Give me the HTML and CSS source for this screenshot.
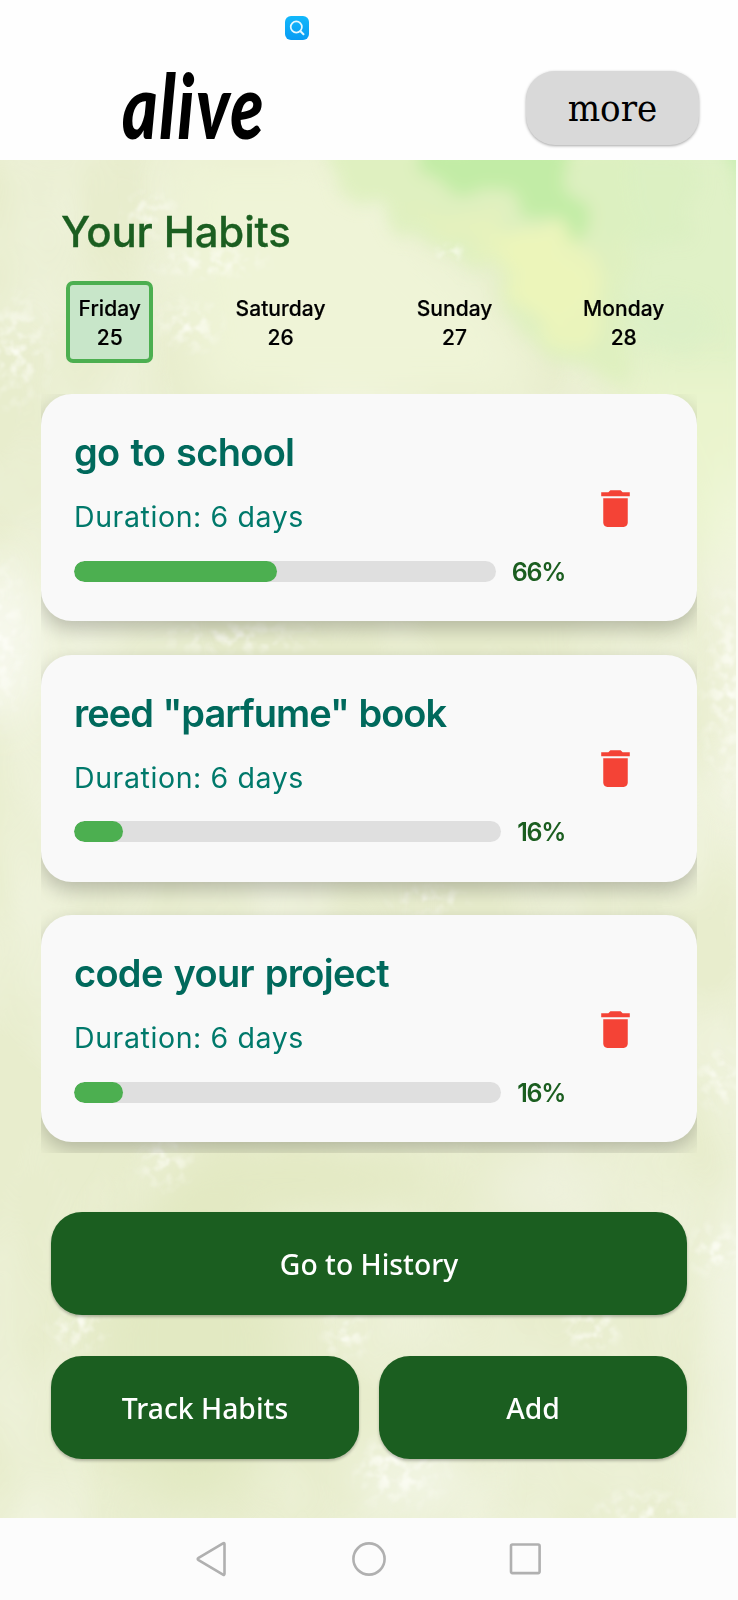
FILE: index.html
```html
<!DOCTYPE html>
<html lang="en">
<head>
<meta charset="utf-8">
<title>alive</title>
<link rel="stylesheet" href="styles.css">
</head>
<body>
<header class="header">
  <div class="status">
    <svg class="search" viewBox="0 0 24 24"><defs><linearGradient id="sg" x1="0" y1="0" x2="0" y2="1"><stop offset="0" stop-color="#12b8fb"/><stop offset="1" stop-color="#089bf3"/></linearGradient></defs><rect width="24" height="24" rx="6" fill="url(#sg)"/><circle cx="11.3" cy="11" r="5.600" fill="none" stroke="#e6f8ff" stroke-width="1.7"/><path d="M15.500 15.200l3 3" stroke="#e6f8ff" stroke-width="2" stroke-linecap="round"/></svg>
  </div>
  <div class="brandbar">
    <div class="logo">alive</div>
    <button class="more">more</button>
  </div>
</header>
<main class="main">
  <svg class="wash" viewBox="0 160 738 1358" preserveAspectRatio="none">
    <defs>
      <filter id="soft" x="-60%" y="-60%" width="220%" height="220%"><feGaussianBlur stdDeviation="24"/></filter>
      <filter id="edge" x="-20%" y="-20%" width="140%" height="140%"><feTurbulence type="fractalNoise" baseFrequency=".025" numOctaves="4" seed="4" result="n"/><feDisplacementMap in2="n" in="SourceGraphic" scale="45" xChannelSelector="R" yChannelSelector="G" result="d"/><feGaussianBlur in="d" stdDeviation="8"/></filter>
      <filter id="speck" x="0" y="0" width="100%" height="100%"><feTurbulence type="fractalNoise" baseFrequency=".09" numOctaves="4" seed="8"/><feColorMatrix values="0 0 0 0 1  0 0 0 0 1  0 0 0 0 .96  3.6 0 0 0 -1.55" result="n"/><feComposite in="n" in2="SourceGraphic" operator="in"/><feGaussianBlur stdDeviation=".8"/></filter>
      <filter id="cloud" x="0" y="0" width="100%" height="100%"><feTurbulence type="fractalNoise" baseFrequency=".007 .004" numOctaves="3" seed="13"/><feColorMatrix values="0 0 0 0 .96  0 0 0 0 .97  0 0 0 0 .91  2.4 0 0 0 -.95"/></filter>
      <radialGradient id="w"><stop offset="0" stop-color="#fff"/><stop offset="1" stop-color="#fff" stop-opacity="0"/></radialGradient>
    </defs>
    <rect y="160" width="738" height="1358" fill="#e8edcd"/>
    <rect y="160" width="738" height="1358" filter="url(#cloud)" opacity=".5"/>
    <g filter="url(#soft)">
      <path d="M170 150H330L520 330 540 400H200Z" fill="#eff4d7"/>
      <path d="M340 120H780V400L660 390 560 320Z" fill="#e0f1c7"/>
      <path d="M600 370H780V560H690Z" fill="#eaf4cd"/>
      <ellipse cx="5" cy="640" rx="14" ry="90" fill="#fff"/>
      <ellipse cx="736" cy="640" rx="12" ry="180" fill="#fafaf0"/>
      <ellipse cx="190" cy="1350" rx="90" ry="170" fill="#e2e9c2"/>
      <ellipse cx="300" cy="1180" rx="150" ry="40" fill="#e3e9c3"/>
      <ellipse cx="738" cy="1400" rx="20" ry="220" fill="#f5f8ea"/>
      <ellipse cx="415" cy="1480" rx="60" ry="30" fill="#f3f6e6"/>
      <ellipse cx="550" cy="1190" rx="60" ry="40" fill="#eef1dc"/>
    </g>
    <g filter="url(#edge)">
      <path d="M325 140H630V390L570 370 520 330 480 265 410 245 360 205Z" fill="#dff0c0"/>
      <path d="M400 200 490 215 560 245 590 300 560 320 505 300 470 250Z" fill="#e6f2bb" opacity=".8"/>
      <path d="M500 225 580 235 610 280 590 350 560 340 520 300Z" fill="#eef6b9" opacity=".75"/>
      <path d="M428 140H570L585 215 570 238 535 222 510 192 430 182Z" fill="#c2eca6"/>
      <path d="M580 150H690V240L600 250Z" fill="#daf0c0" opacity=".7"/>
      <path d="M725 140H770V215L740 195Z" fill="#c8eeb0"/>
      <path d="M620 300 700 300 720 350 650 345Z" fill="#daf0c6" opacity=".6"/>
    </g>
    <g filter="url(#speck)" opacity=".8">
      <rect y="160" width="738" height="1358" fill="#fff" opacity="0"/>
      <ellipse cx="150" cy="215" rx="35" ry="30" fill="url(#w)"/><ellipse cx="210" cy="262" rx="70" ry="22" fill="url(#w)"/>
      <ellipse cx="190" cy="325" rx="40" ry="35" fill="url(#w)"/><ellipse cx="15" cy="350" rx="45" ry="70" fill="url(#w)"/>
      <ellipse cx="450" cy="252" rx="20" ry="12" fill="url(#w)"/><ellipse cx="0" cy="640" rx="35" ry="100" fill="url(#w)"/>
      <ellipse cx="730" cy="690" rx="35" ry="130" fill="url(#w)"/><ellipse cx="720" cy="1080" rx="30" ry="40" fill="url(#w)"/>
      <ellipse cx="165" cy="1163" rx="35" ry="35" fill="url(#w)"/><ellipse cx="78" cy="1328" rx="38" ry="28" fill="url(#w)"/><ellipse cx="78" cy="1328" rx="26" ry="20" fill="url(#w)"/>
      <ellipse cx="592" cy="1328" rx="40" ry="26" fill="url(#w)"/><ellipse cx="592" cy="1328" rx="30" ry="18" fill="url(#w)"/><ellipse cx="345" cy="1335" rx="30" ry="35" fill="url(#w)"/>
      <ellipse cx="400" cy="1472" rx="60" ry="45" fill="url(#w)"/><ellipse cx="395" cy="1465" rx="40" ry="28" fill="url(#w)"/><ellipse cx="716" cy="1250" rx="35" ry="35" fill="url(#w)"/>
      <ellipse cx="640" cy="1510" rx="60" ry="25" fill="url(#w)"/><ellipse cx="240" cy="638" rx="100" ry="20" fill="url(#w)"/>
      <ellipse cx="430" cy="900" rx="50" ry="18" fill="url(#w)"/>
    </g>
    <rect x="736" y="160" width="2" height="1358" fill="#fbfdf5"/>
  </svg>
  <h1 class="title">Your Habits</h1>
  <div class="days">
    <div class="day active">Friday<br>25</div>
    <div class="day">Saturday<br>26</div>
    <div class="day">Sunday<br>27</div>
    <div class="day">Monday<br>28</div>
  </div>
  <section class="list">
    <article class="card">
      <div class="info">
        <h2 class="name">go to school</h2>
        <p class="dur">Duration: 6 days</p>
        <div class="progress"><div class="track"><div class="fill" style="width:203px"></div></div><span class="pct">66%</span></div>
      </div>
      <svg class="trash" viewBox="0 0 24 24"><path d="M6 19c0 1.100.9 2 2 2h8c1.100 0 2-.9 2-2V7H6v12zM19 4h-3.500l-1-1h-5l-1 1H5v2h14V4z"/></svg>
    </article>
    <article class="card">
      <div class="info">
        <h2 class="name tight">reed "parfume" book</h2>
        <p class="dur">Duration: 6 days</p>
        <div class="progress"><div class="track"><div class="fill" style="width:49px"></div></div><span class="pct">16%</span></div>
      </div>
      <svg class="trash" viewBox="0 0 24 24"><path d="M6 19c0 1.100.9 2 2 2h8c1.100 0 2-.9 2-2V7H6v12zM19 4h-3.500l-1-1h-5l-1 1H5v2h14V4z"/></svg>
    </article>
    <article class="card">
      <div class="info">
        <h2 class="name">code your project</h2>
        <p class="dur">Duration: 6 days</p>
        <div class="progress"><div class="track"><div class="fill" style="width:49px"></div></div><span class="pct">16%</span></div>
      </div>
      <svg class="trash" viewBox="0 0 24 24"><path d="M6 19c0 1.100.9 2 2 2h8c1.100 0 2-.9 2-2V7H6v12zM19 4h-3.500l-1-1h-5l-1 1H5v2h14V4z"/></svg>
    </article>
  </section>
  <div class="actions">
    <button class="btn wide">Go to History</button>
    <button class="btn">Track Habits</button>
    <button class="btn">Add</button>
  </div>
</main>
<nav class="nav">
  <svg viewBox="0 0 36 36"><path d="M29.500 3.200V32.800Q29.500 34.500 28 33.600L3.600 19.200Q1.800 18 3.600 16.800L28 2.400Q29.500 1.500 29.500 3.200Z"/></svg>
  <svg viewBox="0 0 36 36"><circle cx="18" cy="18" r="15.600"/></svg>
  <svg viewBox="0 0 36 36"><rect x="3" y="3.500" width="28.600" height="28.600" rx="1.500"/></svg>
</nav>
</body>
</html>
```
FILE: styles.css
```css
* { box-sizing: border-box; }
body { margin: 0; width: 738px; height: 1600px; overflow: hidden; background: #fff; font-family: Inter, Roboto, sans-serif; }
button { border: 0; padding: 0; }
.header { height: 160px; background: #fefefe; }
.status { height: 71px; padding: 16px 0 0 284.500px; }
.search { display: block; width: 24px; height: 24px; }
.brandbar { display: flex; justify-content: space-between; padding: 0 39px 0 122px; }
.logo { margin-top: 4px; font: italic 900 68px/74px Lato, sans-serif; color: #000; letter-spacing: 1.500px; transform: scaleY(1.31); transform-origin: 0 60px; }
.more { width: 173px; height: 74px; border-radius: 29px; background: #d9d9d9; box-shadow: 0 1px 3px rgba(0,0,0,.35); font: 38px/68px "DejaVu Serif Condensed", "DejaVu Serif", serif; font-stretch: condensed; color: #000; }
.main { position: relative; height: 1358px; overflow: hidden; }
.wash { position: absolute; inset: 0; width: 100%; height: 100%; z-index: -1; }
.title { margin: 0; padding: 46px 0 0 61px; height: 121px; font-weight: 500; font-size: 42px; line-height: 51px; letter-spacing: -.2px; color: #1b5e20; -webkit-text-stroke: .3px #1b5e20; }
.days { display: flex; justify-content: space-between; margin: 0 61px 0 66px; height: 82px; }
.day { border: 4px solid transparent; border-radius: 7px; padding: 9px 8.500px 0; text-align: center; font-size: 21px; line-height: 29px; font-weight: 500; letter-spacing: .05px; color: #000; -webkit-text-stroke: .2px #000; }
.day:nth-child(2) { margin: 0 -2.500px 0 2.500px; }
.day:nth-child(3) { margin: 0 -1.500px 0 1.500px; }
.active { background: #c8e6c9; border-color: #4caf50; }
.list { display: flex; flex-direction: column; gap: 33.500px; margin: 31px 41px 0; height: 759px; overflow: hidden; }
.card { flex: none; display: flex; height: 227px; padding: 36px 56px 0 33px; border-radius: 31px; background: #f9f9f9; box-shadow: 0 8px 20px rgba(0,0,0,.23); }
.info { width: 491px; }
.name { margin: 0; font-size: 38px; line-height: 45px; font-weight: 600; letter-spacing: -.7px; word-spacing: 2px; color: #00695c; white-space: nowrap; }
.tight { letter-spacing: -1px; word-spacing: 1px; }
.dur { margin: 25px 0 0; font-size: 28.500px; line-height: 34px; letter-spacing: .6px; color: #00796b; }
.progress { display: flex; align-items: center; gap: 16px; margin-top: 21px; height: 32px; }
.track { flex: 1; height: 21px; border-radius: 10.500px; background: #dfdfdf; overflow: hidden; }
.fill { height: 100%; border-radius: 10.500px; background: #4caf50; }
.pct { padding-top: 1px; font-size: 25px; font-weight: 600; letter-spacing: -1.300px; color: #1b5e20; }
.trash { width: 49px; height: 49px; margin: 53.500px 0 0 25.500px; fill: #f44336; }
.actions { display: grid; grid-template-columns: 1fr 1fr; gap: 41px 20px; padding: 59px 51px 0; }
.btn { height: 103px; border-radius: 31px; background: #1b5e20; box-shadow: 0 2px 3px rgba(0,0,0,.25); color: #fff; font: 500 28.300px/38px "Noto Sans", sans-serif; }
.wide { grid-column: 1 / 3; }
.nav { display: flex; justify-content: center; gap: 120.500px; height: 82px; padding-top: 23px; background: #fcfcfc; }
.nav svg { width: 36px; height: 36px; fill: none; stroke: #b0b0b0; stroke-width: 2.600; }
```
